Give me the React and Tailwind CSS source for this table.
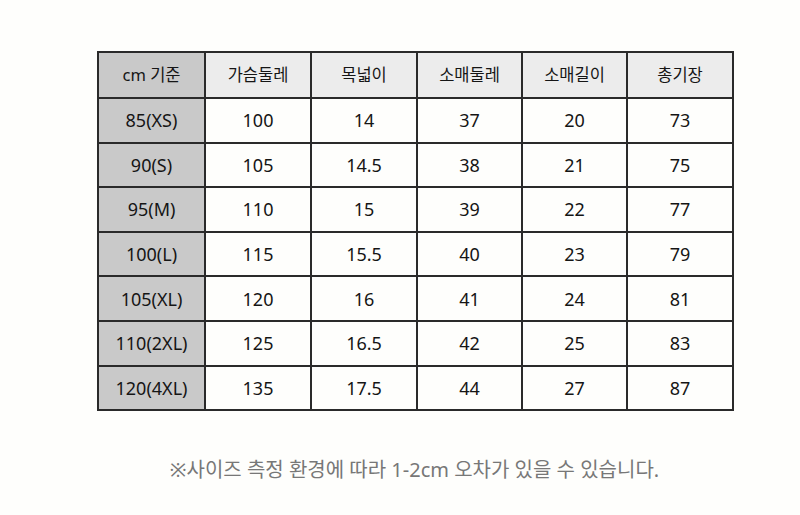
import React from 'react'

const header = ['cm 기준', '가슴둘레', '목넓이', '소매둘레', '소매길이', '총기장']

const rows = [
  ['85(XS)', '100', '14', '37', '20', '73'],
  ['90(S)', '105', '14.5', '38', '21', '75'],
  ['95(M)', '110', '15', '39', '22', '77'],
  ['100(L)', '115', '15.5', '40', '23', '79'],
  ['105(XL)', '120', '16', '41', '24', '81'],
  ['110(2XL)', '125', '16.5', '42', '25', '83'],
  ['120(4XL)', '135', '17.5', '44', '27', '87'],
]

const font = { fontFamily: '"Noto Sans", "Noto Sans CJK KR", sans-serif' }

export default function App() {
  return (
    <div className="w-[800px] h-[515px] bg-[#fefefc] text-[#151515] overflow-hidden" style={font}>
      <div className="pt-[51px] pl-[97px]">
        <table className="table-fixed border-collapse w-[635px]">
          <colgroup>
            <col className="w-[107px]" />
            <col className="w-[106px]" />
            <col className="w-[106px]" />
            <col className="w-[105px]" />
            <col className="w-[105px]" />
            <col className="w-[106px]" />
          </colgroup>
          <thead>
            <tr className="h-[46px]">
              {header.map((h, i) => (
                <th
                  key={h}
                  className={`border-2 border-[#2a2a2a] font-normal text-[16.5px] text-center ${i === 0 ? 'bg-[#c9c9c9]' : 'bg-[#ececec]'}`}
                >
                  {h}
                </th>
              ))}
            </tr>
          </thead>
          <tbody>
            {rows.map((r) => (
              <tr key={r[0]} className="h-[44.6px]">
                {r.map((c, i) => (
                  <td
                    key={i}
                    className={`border-2 border-[#2a2a2a] text-[18px] leading-none text-center ${i === 0 ? 'bg-[#c9c9c9]' : 'bg-[#fefefc]'}`}
                  >
                    {c}
                  </td>
                ))}
              </tr>
            ))}
          </tbody>
        </table>
      </div>
      <p className="mt-[44px] w-[635px] ml-[97px] text-center text-[20px] text-[#777777]">
        ※사이즈 측정 환경에 따라 1-2cm 오차가 있을 수 있습니다.
      </p>
    </div>
  )
}
